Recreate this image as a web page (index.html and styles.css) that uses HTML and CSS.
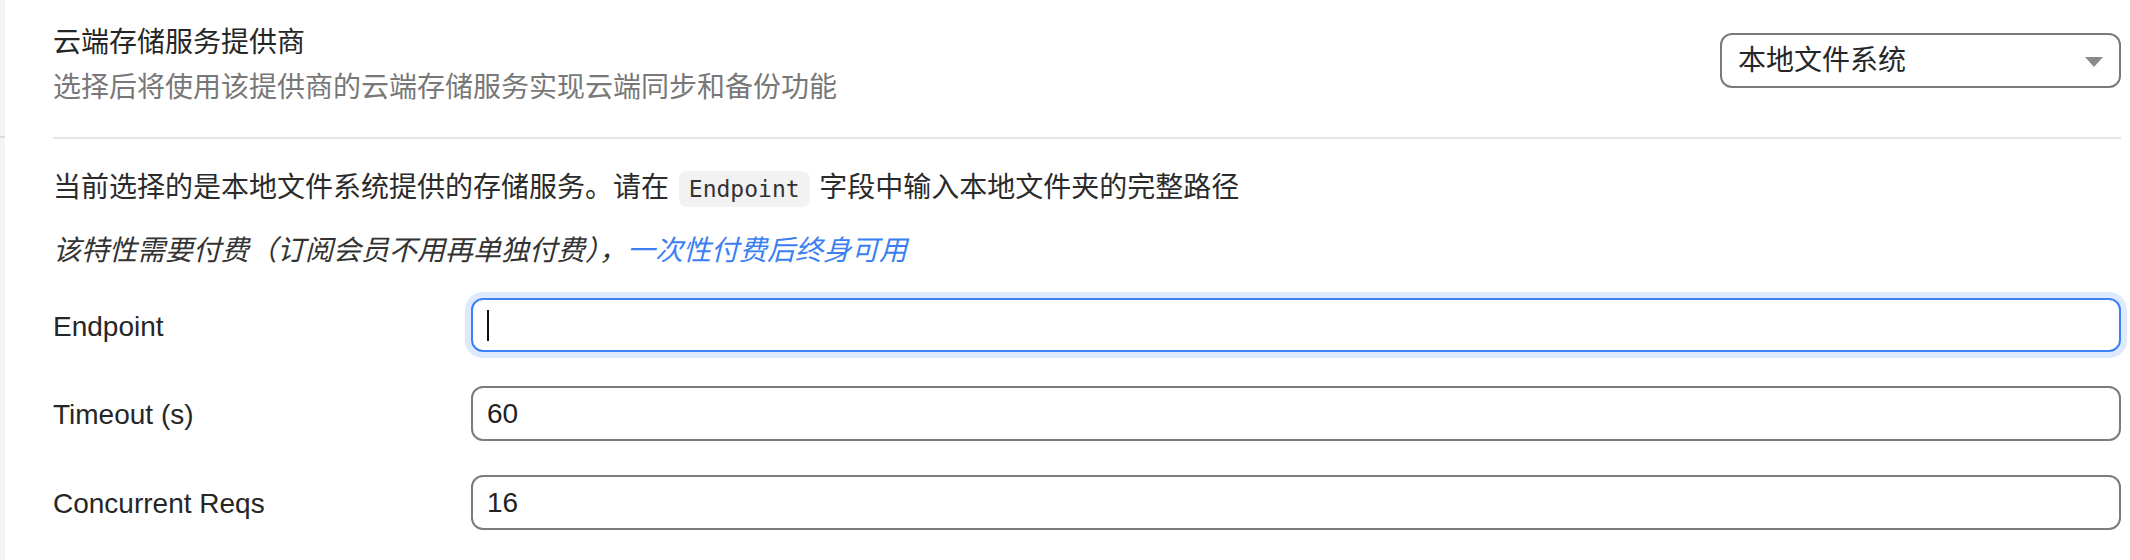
FILE: index.html
```html
<!doctype html>
<html>
<head>
	<meta charset="utf-8">
	<title>云端存储</title>
	<link rel="stylesheet" href="styles.css">
</head>
<body>
	<div class="page">
		<div class="side"><div class="side-mark"></div></div>
		<div class="main">
			<!-- 提供商选择 -->
			<div class="setting-head">
				<div class="setting-text">
					<div class="setting-title">云端存储服务提供商</div>
					<div class="setting-desc">选择后将使用该提供商的云端存储服务实现云端同步和备份功能</div>
				</div>
				<div class="select">
					<span>本地文件系统</span>
					<i class="arrow"></i>
				</div>
			</div>
			<div class="divider"></div>

			<p class="tip">当前选择的是本地文件系统提供的存储服务。请在 <code>Endpoint</code> 字段中输入本地文件夹的完整路径</p>
			<p class="paid">该特性需要付费（订阅会员不用再单独付费），<a href="javascript:void(0)">一次性付费后终身可用</a></p>

			<div class="form">
				<label>Endpoint</label>
				<div class="field focus">
					<input type="text" value="">
					<span class="caret"></span>
				</div>
				<label>Timeout (s)</label>
				<div class="field"><input type="text" value="60"></div>
				<label>Concurrent Reqs</label>
				<div class="field"><input type="text" value="16"></div>
			</div>
		</div>
	</div>
</body>
</html>
```

FILE: styles.css
```css
*{margin:0;padding:0;box-sizing:border-box;}
html,body{height:560px;overflow:hidden;}
body{background:#fff;color:#2b2b2b;font-size:28px;font-family:"Liberation Sans","Noto Sans CJK SC",sans-serif;}
a{text-decoration:none;color:#3b7ff2;}

.page{display:flex;height:560px;}
.side{width:5px;background:#f4f4f4;}
.side-mark{margin-top:136px;height:2px;background:#dcdcdc;}
.main{flex:1;padding:0 9px 0 48px;}

.setting-head{display:flex;justify-content:space-between;align-items:flex-start;padding-top:20px;}
.setting-title{line-height:42px;padding-top:2px;color:#262626;}
.setting-desc{line-height:42px;margin-top:3px;color:#787878;}
.select{position:relative;width:401px;height:55px;border:2px solid #7a7a7a;border-radius:12px;
	padding:0 16px;line-height:51px;color:#262626;margin-top:13px;}
.select .arrow{position:absolute;right:16px;top:22px;width:0;height:0;
	border-left:9px solid transparent;border-right:9px solid transparent;border-top:10px solid #8a8a8a;}

.divider{height:2px;background:#e4e4e4;margin-top:28px;}

.tip{line-height:42px;margin-top:28px;color:#2b2b2b;}
.tip code{font-family:"DejaVu Sans Mono",monospace;font-size:23px;background:#f2f2f2;border-radius:8px;
	padding:5px 10px;margin:0 2px;color:#333;}
.paid{line-height:42px;margin-top:20px;font-style:italic;color:#333;}

.form{display:grid;grid-template-columns:418px 1fr;row-gap:34px;align-items:center;margin-top:26px;}
.form label{color:#262626;padding-top:3px;}
.field{position:relative;}
.field input{display:block;width:100%;height:55px;border:2px solid #7c7c7c;border-radius:12px;
	padding:0 14px;font-size:28px;font-family:"Liberation Sans",sans-serif;color:#222;outline:none;}
.field.focus input{border-color:#3b82f6;box-shadow:0 0 0 6px #dfe9fd;height:54px;}
.field .caret{position:absolute;left:16px;top:12px;width:2px;height:31px;background:#111;}
```
